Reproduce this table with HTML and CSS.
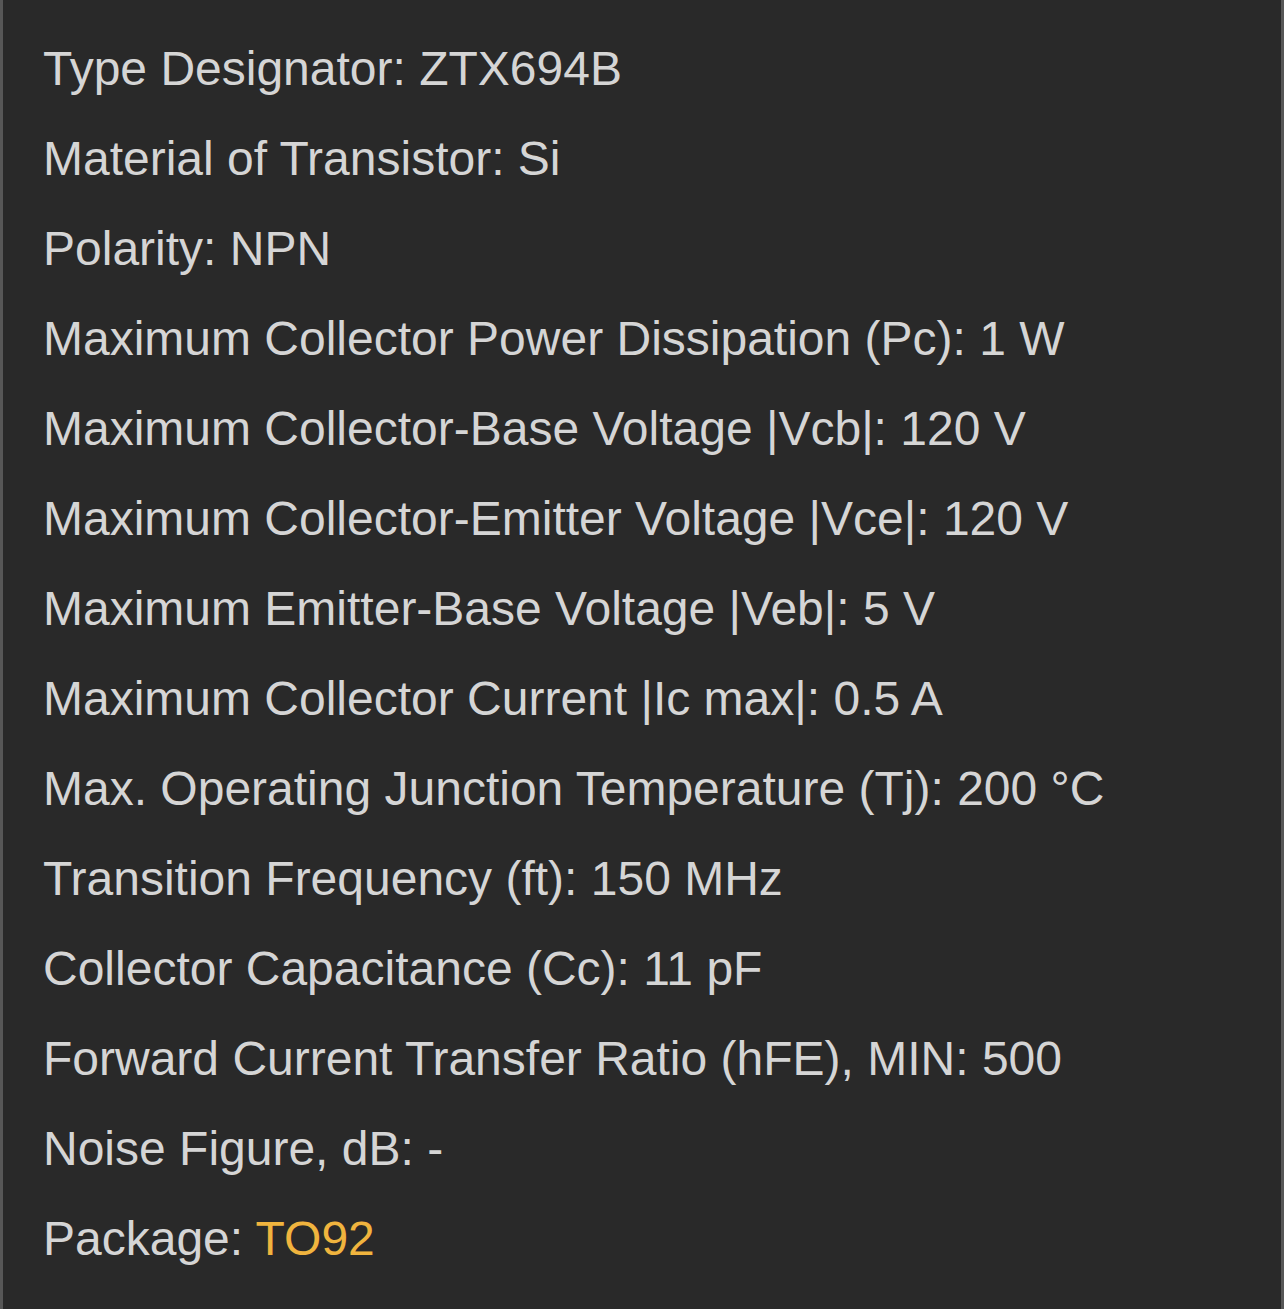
FILE: index.html
```html
<!DOCTYPE html>
<html>
<head>
<meta charset="utf-8">
<link rel="stylesheet" href="styles.css">
</head>
<body>
<div class="panel">
  <div class="row">Type Designator: ZTX694B</div>
  <div class="row">Material of Transistor: Si</div>
  <div class="row">Polarity: NPN</div>
  <div class="row">Maximum Collector Power Dissipation (Pc): 1 W</div>
  <div class="row">Maximum Collector-Base Voltage |Vcb|: 120 V</div>
  <div class="row">Maximum Collector-Emitter Voltage |Vce|: 120 V</div>
  <div class="row">Maximum Emitter-Base Voltage |Veb|: 5 V</div>
  <div class="row">Maximum Collector Current |Ic max|: 0.5 A</div>
  <div class="row">Max. Operating Junction Temperature (Tj): 200 °C</div>
  <div class="row">Transition Frequency (ft): 150 MHz</div>
  <div class="row">Collector Capacitance (Cc): 11 pF</div>
  <div class="row">Forward Current Transfer Ratio (hFE), MIN: 500</div>
  <div class="row">Noise Figure, dB: -</div>
  <div class="row">Package: <a class="pkg" href="#">TO92</a></div>
</div>
</body>
</html>
```
FILE: styles.css
```css
html, body {
  margin: 0;
  padding: 0;
  background: #292929;
}
.panel {
  box-sizing: border-box;
  width: 1284px;
  height: 1309px;
  background: #292929;
  border-left: 3px solid #575757;
  border-right: 3px solid #575757;
  padding: 24px 0 0 40px;
  font-family: "Liberation Sans", Arial, sans-serif;
  font-size: 48px;
  line-height: 90px;
  color: #d5d5d5;
}
.row {
  white-space: nowrap;
}
.pkg {
  color: #f0b43e;
  text-decoration: none;
}
```
